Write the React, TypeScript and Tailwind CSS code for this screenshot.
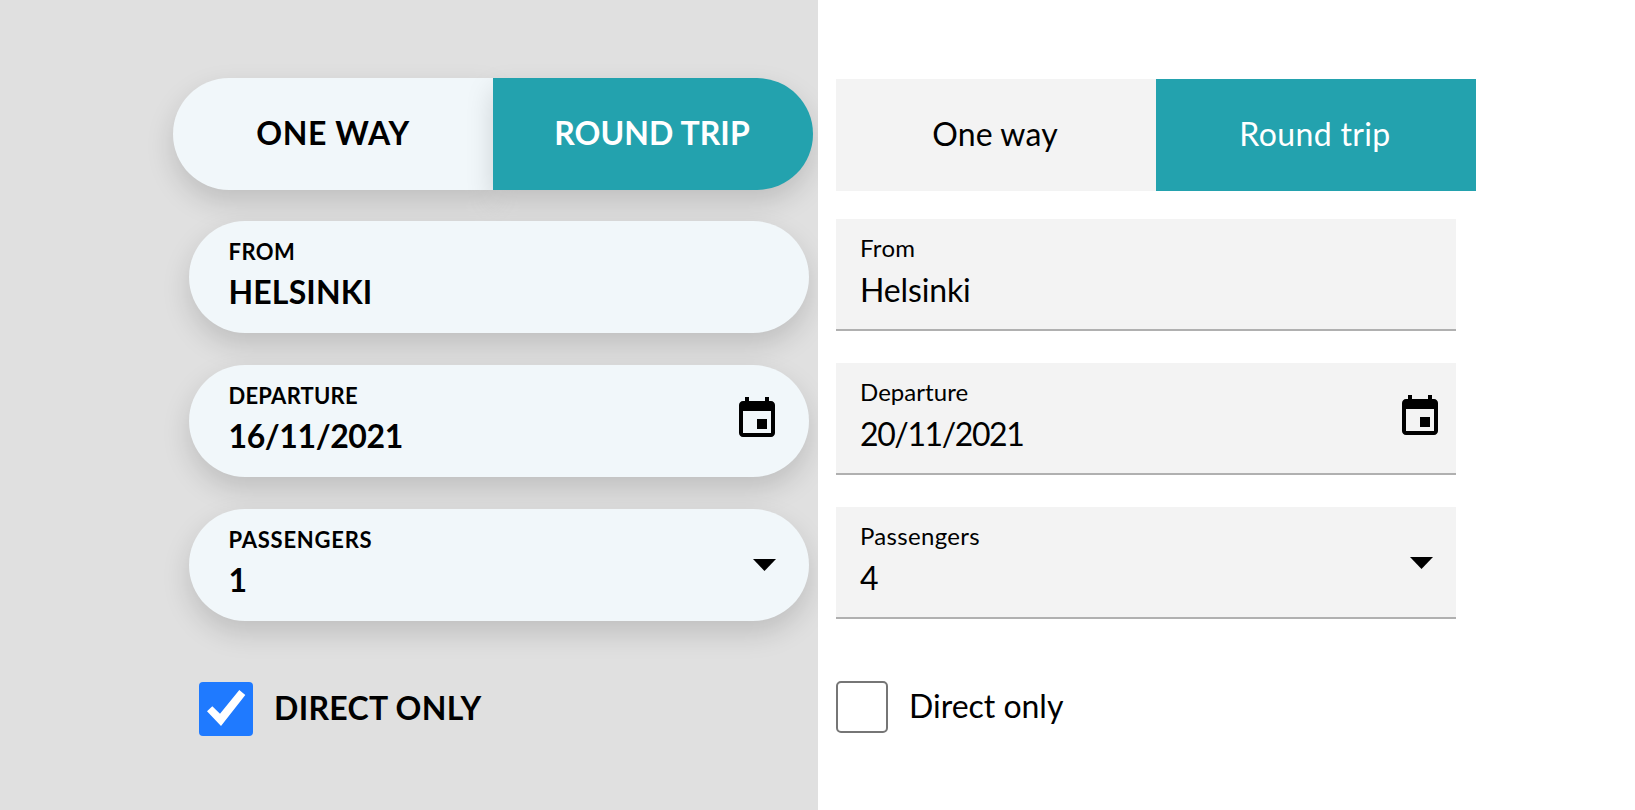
import React from 'react';

const SHADOW = 'shadow-[0_12px_28px_rgba(0,0,0,0.15)]';

function CalendarIcon() {
  return (
    <svg className="h-12 w-12 fill-black" viewBox="0 0 24 24">
      <path d="M17 12h-5v5h5v-5zM16 1v2H8V1H6v2H5c-1.11 0-1.99.9-1.99 2L3 19c0 1.1.89 2 2 2h14c1.1 0 2-.9 2-2V5c0-1.1-.9-2-2-2h-1V1h-2zm3 18H5V8h14v11z" />
    </svg>
  );
}

function CaretIcon() {
  return (
    <svg className="h-3 w-[23px] fill-black" viewBox="0 0 23 12">
      <path d="M0 0H23L11.5 12z" />
    </svg>
  );
}

type FieldProps = {
  label: string;
  value: string;
  labelClass: string;
  valueClass: string;
  children?: React.ReactNode;
};

function PillField({ label, value, labelClass, valueClass, children }: FieldProps) {
  return (
    <div className={`flex h-28 justify-between rounded-full bg-[#f1f7fa] pl-[39.5px] ${SHADOW}`}>
      <div className="flex flex-col gap-[6px] pt-[17px] font-bold">
        <span className={`text-[22px] leading-7 ${labelClass}`}>{label}</span>
        <span className={`text-[32px] leading-10 ${valueClass}`}>{value}</span>
      </div>
      {children}
    </div>
  );
}

function FlatField({ label, value, labelClass, valueClass, children }: FieldProps) {
  return (
    <div className="flex h-28 justify-between border-b-2 border-[#b0b0b0] bg-[#f3f3f3] pl-6">
      <div className="flex flex-col gap-2 pt-[15px]">
        <span className={`text-2xl leading-7 ${labelClass}`}>{label}</span>
        <span className={`text-[32px] leading-10 ${valueClass}`}>{value}</span>
      </div>
      {children}
    </div>
  );
}

export default function App() {
  return (
    <div className="flex h-[810px] w-[1635px] overflow-hidden bg-white font-['Lato',sans-serif] text-black">
      <section className="w-[818px] shrink-0 overflow-hidden bg-[#e0e0e0] pt-[78px] pl-[173px]">
        <div className="flex h-28 w-[640px] text-[32px] leading-10 font-bold">
          <button className={`flex w-80 items-center justify-center rounded-l-full bg-[#f1f7fa] pb-0.5 tracking-[0.65px] ${SHADOW}`}>
            ONE WAY
          </button>
          <button className={`flex w-80 items-center justify-center rounded-r-full bg-[#23a2ae] pr-0.5 pb-0.5 tracking-[0.1px] text-white ${SHADOW}`}>
            ROUND TRIP
          </button>
        </div>
        <div className="mt-[31px] ml-4 flex w-[620px] flex-col gap-8">
          <PillField label="FROM" value="HELSINKI" labelClass="tracking-[0.45px]" valueClass="tracking-[0.15px]" />
          <PillField label="DEPARTURE" value="16/11/2021" labelClass="tracking-[0.24px]" valueClass="tracking-[-0.4px]">
            <div className="pt-[30px] pr-7">
              <CalendarIcon />
            </div>
          </PillField>
          <PillField label="PASSENGERS" value="1" labelClass="tracking-[0.75px]" valueClass="">
            <div className="pt-[50px] pr-[33px]">
              <CaretIcon />
            </div>
          </PillField>
        </div>
        <label className="mt-[61px] ml-[26px] flex h-[54px] items-center gap-[21px]">
          <span className="h-[54px] w-[54px] rounded bg-[#1f7aff]">
            <svg className="h-[54px] w-[54px] fill-white" viewBox="0 0 54 54">
              <path d="M8 29.3L13.3 24.3L21 31.7L40.3 8L46.3 13L22 44z" />
            </svg>
          </span>
          <span className="pb-0.5 text-[32px] leading-10 font-bold tracking-[0.3px]">DIRECT ONLY</span>
        </label>
      </section>

      <section className="flex-1 pt-[79px] pl-[18px]">
        <div className="flex h-28 w-[640px] text-[32px] leading-10">
          <button className="flex w-80 items-center justify-center bg-[#f3f3f3] pr-0.5 pb-0.5 tracking-[0.15px]">One way</button>
          <button className="flex w-80 items-center justify-center bg-[#23a2ae] pr-0.5 pb-0.5 tracking-[0.36px] text-white">
            Round trip
          </button>
        </div>
        <div className="mt-7 flex w-[620px] flex-col gap-8">
          <FlatField label="From" value="Helsinki" labelClass="tracking-[0.3px]" valueClass="tracking-[-0.15px]" />
          <FlatField label="Departure" value="20/11/2021" labelClass="tracking-[0.05px]" valueClass="tracking-[-1.4px]">
            <div className="pt-[30px] pr-3">
              <CalendarIcon />
            </div>
          </FlatField>
          <FlatField label="Passengers" value="4" labelClass="tracking-[0.32px]" valueClass="">
            <div className="pt-[50px] pr-[23px]">
              <CaretIcon />
            </div>
          </FlatField>
        </div>
        <label className="mt-[62px] flex h-[52px] items-center gap-[21px]">
          <span className="h-[52px] w-[52px] rounded-[5px] border-2 border-[#767676] bg-white" />
          <span className="pb-0.5 text-[32px] leading-10 tracking-[-0.02px]">Direct only</span>
        </label>
      </section>
    </div>
  );
}
